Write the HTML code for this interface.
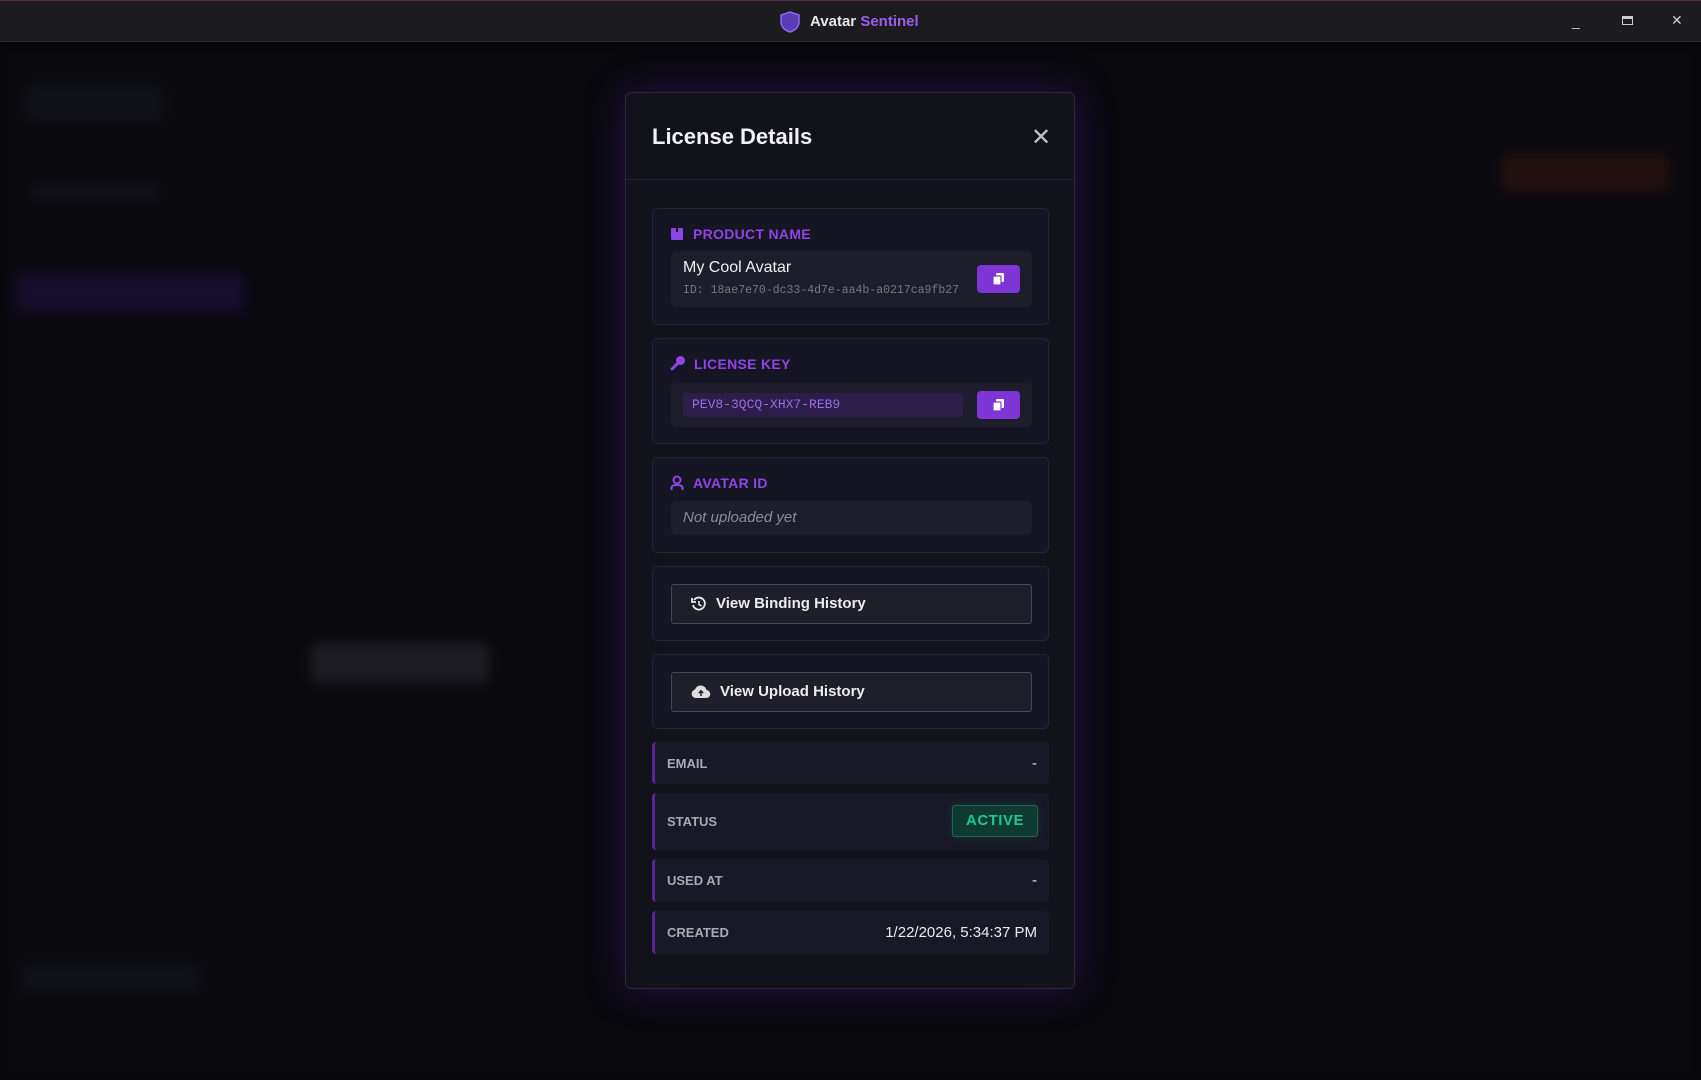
<!DOCTYPE html>
<html><head><meta charset="utf-8"><style>
*{box-sizing:border-box;margin:0;padding:0}
body{width:1701px;height:1080px;overflow:hidden;background:#07070b;font-family:"Liberation Sans",sans-serif;position:relative}
.tb{position:absolute;left:0;top:0;width:1701px;height:42px;background:#1c1c1f;border-bottom:1px solid #2a2a30;border-top:1px solid #5a2a48}
.tb .t{position:absolute;left:810px;top:12px;font-size:15px;font-weight:bold;color:#e6e6ea}
.tb .t span{color:#9b5cf0}
.bg{position:absolute;left:0;top:43px;width:1701px;height:1037px;background:#08080d;filter:blur(6px)}
.blob{position:absolute;background:#111119;border-radius:6px}
.modal{position:absolute;left:625px;top:92px;width:450px;height:897px;background:#12121b;border:1px solid #2a2838;border-radius:6px;box-shadow:0 0 40px rgba(110,40,200,.35)}
.hdr{position:absolute;left:0;top:0;width:100%;height:87px;border-bottom:1px solid #24222f}
.hdr h1{position:absolute;left:26px;top:31px;font-size:22px;color:#f2f2f5}
.x{position:absolute;left:405px;top:30px;font-size:24px;color:#c0c0c8}
.card{position:absolute;left:26px;width:397px;background:#161523;border:1px solid #262238;border-radius:5px}
.lbl{position:absolute;left:40px;font-size:14px;font-weight:bold;color:#8e44e6;letter-spacing:.3px}
.ic{position:absolute;left:17px}
.inner{position:absolute;left:18px;width:361px;background:#1e1d2b;border-radius:5px}
.cp{position:absolute;width:43px;height:28px;background:#7e35d6;border-radius:4px}
.btn{position:absolute;left:18px;width:361px;height:40px;border:1px solid #4a4858;background:#1f1e2b;border-radius:3px;color:#ecebf2;font-weight:bold;font-size:15px}
.row{position:absolute;left:26px;width:397px;background:#181826;border-left:3px solid #5a2598;border-radius:4px}
.row .k{position:absolute;left:12px;font-size:13px;font-weight:bold;color:#a9a9b6}
.row .v{position:absolute;right:12px;font-size:15px;color:#ececf1}
</style></head><body>
<div class="bg">
<div class="blob" style="left:25px;top:40px;width:140px;height:40px"></div>
<div class="blob" style="left:15px;top:230px;width:230px;height:40px;background:#170d2c"></div>
<div class="blob" style="left:30px;top:140px;width:130px;height:18px"></div>
<div class="blob" style="left:310px;top:600px;width:180px;height:40px;background:#1c1c22"></div>
<div class="blob" style="left:1500px;top:110px;width:170px;height:40px;background:#221010"></div>
<div class="blob" style="left:20px;top:920px;width:180px;height:30px"></div>
</div>
<div class="tb">
<svg style="position:absolute;left:779px;top:10px" width="22" height="22" viewBox="0 0 22 22"><path d="M11 1L20 4V11C20 16 16 19.5 11 21C6 19.5 2 16 2 11V4Z" fill="#5b3bb8" stroke="#8a6cf0" stroke-width="1.5"/></svg>
<div class="t">Avatar <span>Sentinel</span></div>
<div style="position:absolute;left:1572px;top:12px;color:#ccc;font-size:14px">_</div>
<div style="position:absolute;left:1622px;top:15px;width:11px;height:9px;border:1px solid #ccc;border-top-width:3px"></div>
<div style="position:absolute;left:1671px;top:11px;color:#ccc;font-size:14px">✕</div>
</div>
<div class="modal">
<div class="hdr"><h1>License Details</h1><div class="x">✕</div></div>

<div class="card" style="top:115px;height:117px">
<svg class="ic" style="top:18px" width="14" height="14" viewBox="0 0 14 14"><rect x="1" y="4" width="12" height="9" rx="1.5" fill="#8e44e6"/><rect x="1" y="1" width="12" height="4" rx="1" fill="#8e44e6"/><rect x="6" y="1" width="2" height="4" fill="#161523"/></svg>
<div class="lbl" style="top:17px">PRODUCT NAME</div>
<div class="inner" style="top:42px;height:56px">
<div style="position:absolute;left:12px;top:8px;font-size:16px;color:#f0f0f4">My Cool Avatar</div>
<div style="position:absolute;left:12px;top:33px;font-family:'Liberation Mono',monospace;font-size:11.5px;color:#777683">ID: 18ae7e70-dc33-4d7e-aa4b-a0217ca9fb27</div>
<div class="cp" style="left:306px;top:14px"><svg style="position:absolute;left:15px;top:7px" width="13" height="14" viewBox="0 0 13 14"><rect x="4" y="1" width="8" height="9" rx="1" fill="#fff"/><rect x="1" y="4" width="8" height="9" rx="1" fill="#fff" stroke="#7e35d6" stroke-width="1.2"/></svg></div>
</div></div>

<div class="card" style="top:245px;height:106px">
<svg class="ic" style="top:16px" width="16" height="16" viewBox="0 0 16 16"><circle cx="10.5" cy="5.5" r="4.5" fill="#8e44e6"/><path d="M7 9L2 14" stroke="#8e44e6" stroke-width="3" stroke-linecap="round"/></svg>
<div class="lbl" style="top:17px;left:41px">LICENSE KEY</div>
<div class="inner" style="top:44px;height:44px">
<div style="position:absolute;left:12px;top:10px;width:280px;height:24px;background:#2c1d4a;border-radius:3px;font-family:'Liberation Mono',monospace;font-size:13px;color:#9d6ce0;padding:4px 9px">PEV8-3QCQ-XHX7-REB9</div>
<div class="cp" style="left:306px;top:8px"><svg style="position:absolute;left:15px;top:7px" width="13" height="14" viewBox="0 0 13 14"><rect x="4" y="1" width="8" height="9" rx="1" fill="#fff"/><rect x="1" y="4" width="8" height="9" rx="1" fill="#fff" stroke="#7e35d6" stroke-width="1.2"/></svg></div>
</div></div>

<div class="card" style="top:364px;height:96px">
<svg class="ic" style="top:17px" width="14" height="16" viewBox="0 0 14 16"><circle cx="7" cy="5" r="3.5" fill="none" stroke="#8e44e6" stroke-width="2"/><path d="M1.5 15V13C1.5 11 3.5 10 7 10S12.5 11 12.5 13V15" fill="none" stroke="#8e44e6" stroke-width="2"/></svg>
<div class="lbl" style="top:17px">AVATAR ID</div>
<div class="inner" style="top:43px;height:34px">
<div style="position:absolute;left:12px;top:8px;font-size:15px;font-style:italic;color:#8c8b98">Not uploaded yet</div>
</div></div>

<div class="card" style="top:473px;height:75px">
<div class="btn" style="top:17px">
<svg style="position:absolute;left:19px;top:11px" width="16" height="16" viewBox="0 0 16 16"><path d="M3 4A6 6 0 1 1 2 9" fill="none" stroke="#eee" stroke-width="1.8"/><path d="M1 2V6H5" fill="none" stroke="#eee" stroke-width="1.8"/><path d="M8 5V8.5L10.5 10" fill="none" stroke="#eee" stroke-width="1.6"/></svg>
<div style="position:absolute;left:44px;top:10px">View Binding History</div></div></div>

<div class="card" style="top:561px;height:75px">
<div class="btn" style="top:17px">
<svg style="position:absolute;left:19px;top:11px" width="20" height="16" viewBox="0 0 20 16"><path d="M5 14H15A4 4 0 0 0 15.5 6A6 6 0 0 0 4 5.5A4.3 4.3 0 0 0 5 14Z" fill="#ddd"/><path d="M10 12V7M7.8 9L10 6.8L12.2 9" stroke="#1f1e2b" stroke-width="1.5" fill="none"/></svg>
<div style="position:absolute;left:48px;top:10px">View Upload History</div></div></div>

<div class="row" style="top:649px;height:42px"><div class="k" style="top:14px">EMAIL</div><div class="v" style="top:13px">-</div></div>
<div class="row" style="top:700px;height:57px"><div class="k" style="top:21px">STATUS</div>
<div style="position:absolute;right:11px;top:12px;width:86px;height:32px;background:#0f3a31;border:1px solid #1a6a52;border-radius:3px;color:#1fc98e;font-weight:bold;font-size:15px;text-align:center;line-height:30px;letter-spacing:.5px;box-shadow:0 0 10px rgba(20,180,120,.2)">ACTIVE</div></div>
<div class="row" style="top:766px;height:43px"><div class="k" style="top:14px">USED AT</div><div class="v" style="top:13px">-</div></div>
<div class="row" style="top:818px;height:43px"><div class="k" style="top:14px">CREATED</div><div class="v" style="top:13px">1/22/2026, 5:34:37 PM</div></div>
</div>
</body></html>
